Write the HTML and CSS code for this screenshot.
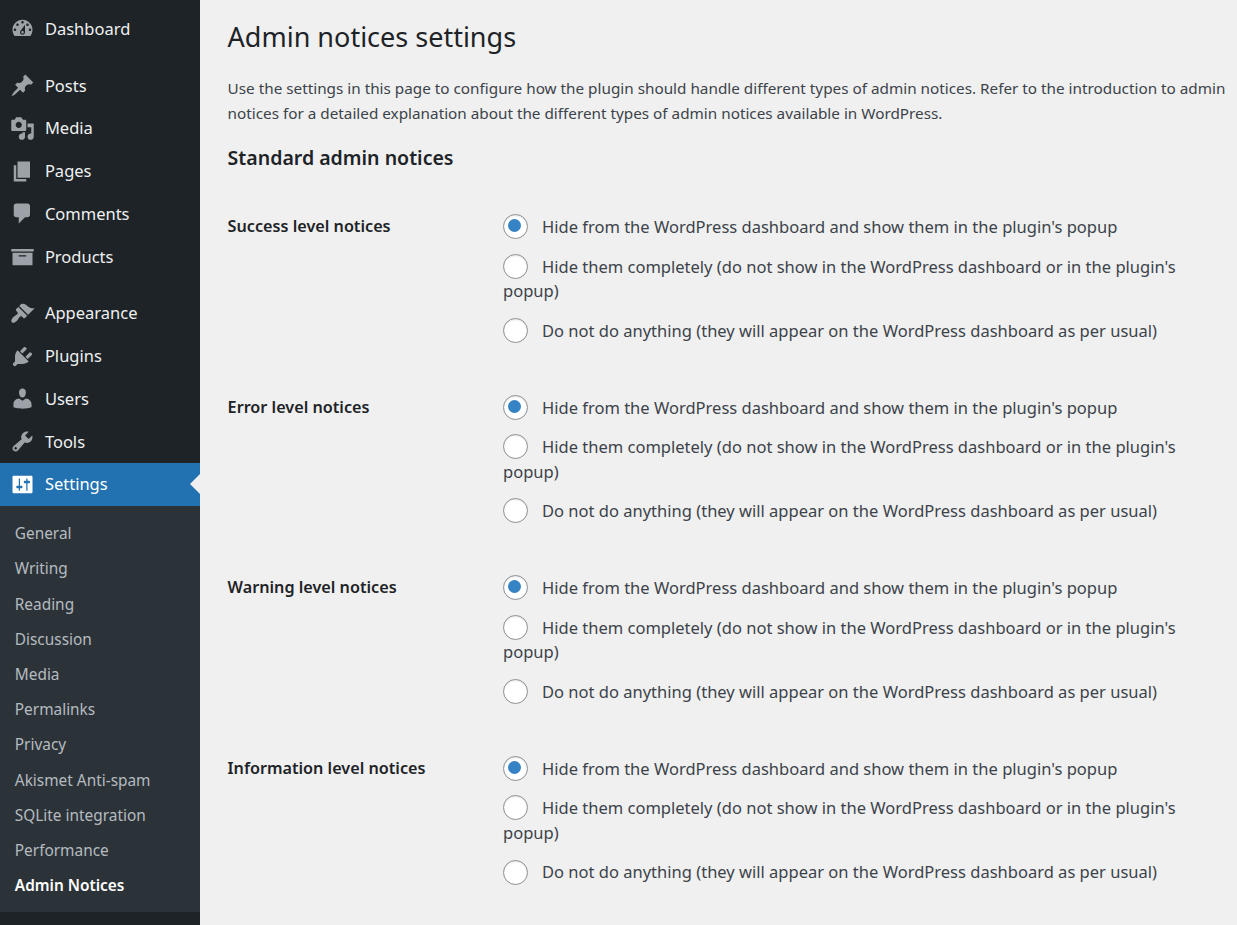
FILE: index.html
```html
<!DOCTYPE html>
<html lang="en">
<head>
<meta charset="utf-8">
<title>Admin notices settings</title>
<link rel="stylesheet" href="styles.css">
</head>
<body>
<div class="admin">
  <aside class="sidebar">
    <ul class="menu">
      <li class="item"><svg class="icon" viewBox="0 0 20 20"><path d="M3.76 16h12.48c1.1-1.37 1.76-3.11 1.76-5 0-4.42-3.58-8-8-8s-8 3.58-8 8c0 1.89.66 3.63 1.76 5zM10 4c.55 0 1 .45 1 1s-.45 1-1 1-1-.45-1-1 .45-1 1-1zM6 6c.55 0 1 .45 1 1s-.45 1-1 1-1-.45-1-1 .45-1 1-1zm8 0c.55 0 1 .45 1 1s-.45 1-1 1-1-.45-1-1 .45-1 1-1zm-5.37 5.55L12 7v6c0 1.1-.9 2-2 2s-2-.9-2-2c0-.57.24-1.08.63-1.45zM4 10c.55 0 1 .45 1 1s-.45 1-1 1-1-.45-1-1 .45-1 1-1zm12 0c.55 0 1 .45 1 1s-.45 1-1 1-1-.45-1-1 .45-1 1-1zm-5 3c0-.55-.45-1-1-1s-1 .45-1 1 .45 1 1 1 1-.45 1-1z"/></svg>Dashboard</li>
      <li class="item item-gap"><svg class="icon" viewBox="0 0 20 20"><path d="M10.44 3.02l1.82-1.82 6.36 6.35-1.83 1.82c-1.05-.68-2.48-.57-3.41.36l-.75.75c-.92.93-1.04 2.35-.35 3.41l-1.83 1.82-2.41-2.41-2.8 2.79c-.42.42-3.38 2.71-3.8 2.29s1.86-3.39 2.28-3.81l2.79-2.79L4.1 9.36l1.83-1.82c1.05.69 2.48.57 3.4-.36l.75-.75c.93-.92 1.05-2.35.36-3.41z"/></svg>Posts</li>
      <li class="item"><svg class="icon" viewBox="0 0 20 20"><path d="M13 11V4c0-.55-.45-1-1-1h-1.67L9 1H5L3.67 3H2c-.55 0-1 .45-1 1v7c0 .55.45 1 1 1h10c.55 0 1-.45 1-1zM7 4.5c1.38 0 2.5 1.12 2.5 2.5S8.38 9.5 7 9.5 4.5 8.38 4.5 7 5.62 4.5 7 4.5zM14 6h5v10.5c0 1.38-1.12 2.5-2.5 2.5S14 17.88 14 16.5s1.12-2.5 2.5-2.5c.17 0 .34.02.5.05V9h-3V6zm-4 8.05V13h2v3.5c0 1.38-1.12 2.5-2.5 2.5S7 17.88 7 16.5 8.12 14 9.5 14c.17 0 .34.02.5.05z"/></svg>Media</li>
      <li class="item"><svg class="icon" viewBox="0 0 20 20"><path d="M6 15V2h10v13H6zm-1 1h8v2H3V5h2v11z"/></svg>Pages</li>
      <li class="item"><svg class="icon" viewBox="0 0 20 20"><path d="M5 2h9c1.1 0 2 .9 2 2v7c0 1.1-.9 2-2 2h-2l-5 5v-5H5c-1.1 0-2-.9-2-2V4c0-1.1.9-2 2-2z"/></svg>Comments</li>
      <li class="item"><svg class="icon" viewBox="0 0 20 20"><path d="M19 4v2H1V4h18zM2 7h16v10H2V7zm11 3V9H7v1h6z"/></svg>Products</li>
      <li class="item item-gap"><svg class="icon" viewBox="0 0 20 20"><path d="M14.48 11.06L7.41 3.99l1.5-1.5c.5-.56 2.3-.47 3.51.32 1.21.8 1.43 1.28 2.91 2.1 1.18.64 2.45 1.26 4.45.85zm-.71.71L6.7 4.7 4.93 6.47c-.39.39-.39 1.02 0 1.41l1.06 1.06c.39.39.39 1.03 0 1.42-.6.6-1.43 1.11-2.21 1.69-.35.26-.7.53-1.01.84C1.43 14.23.4 16.08 1.4 17.07c.99 1 2.84-.03 4.18-1.36.31-.31.58-.66.85-1.02.57-.78 1.08-1.61 1.69-2.21.39-.39 1.02-.39 1.41 0l1.06 1.06c.39.39 1.02.39 1.41 0z"/></svg>Appearance</li>
      <li class="item"><svg class="icon" viewBox="0 0 20 20"><path d="M13.11 4.36L9.87 7.6 8 5.73l3.24-3.24c.35-.34 1.05-.2 1.56.32.52.51.66 1.21.31 1.55zm-8 1.77l.91-1.12 9.01 9.01-1.19.84c-.71.71-2.63 1.16-3.82 1.16H6.14L4.9 17.26c-.59.59-1.54.59-2.12 0-.59-.58-.59-1.53 0-2.12l1.24-1.24v-3.88c0-1.13.4-3.19 1.09-3.89zm7.26 3.97l3.24-3.24c.34-.35 1.04-.21 1.55.31.52.51.66 1.21.31 1.55l-3.24 3.25z"/></svg>Plugins</li>
      <li class="item"><svg class="icon" viewBox="0 0 20 20"><path d="M10 9.25c-2.27 0-2.73-3.44-2.73-3.44C7 4.02 7.82 2 9.97 2c2.16 0 2.98 2.02 2.71 3.81 0 0-.41 3.44-2.68 3.44zm0 2.57L12.72 10c2.39 0 4.52 2.33 4.52 4.53v2.49s-3.65 1.13-7.24 1.13c-3.65 0-7.24-1.13-7.24-1.13v-2.49c0-2.25 1.94-4.48 4.47-4.48z"/></svg>Users</li>
      <li class="item"><svg class="icon" viewBox="0 0 20 20"><path d="M16.68 9.77c-1.34 1.34-3.3 1.67-4.95.99l-5.41 6.52c-.99.99-2.59.99-3.58 0s-.99-2.59 0-3.57l6.52-5.42c-.68-1.65-.35-3.61.99-4.95 1.28-1.28 3.12-1.62 4.72-1.06l-2.89 2.89 2.82 2.82 2.86-2.87c.53 1.58.18 3.39-1.08 4.65zM3.81 16.21c.4.39 1.04.39 1.43 0 .4-.4.4-1.04 0-1.43-.39-.4-1.03-.4-1.43 0-.39.39-.39 1.03 0 1.43z"/></svg>Tools</li>
      <li class="item item-current"><svg class="icon" viewBox="0 0 20 20"><path d="M18 16V4c0-.55-.45-1-1-1H3c-.55 0-1 .45-1 1v12c0 .55.45 1 1 1h14c.55 0 1-.45 1-1zM8 11h1c.55 0 1 .45 1 1s-.45 1-1 1H8v1.5c0 .28-.22.5-.5.5s-.5-.22-.5-.5V13H6c-.55 0-1-.45-1-1s.45-1 1-1h1V5.5c0-.28.22-.5.5-.5s.5.22.5.5V11zm5-2h-1c-.55 0-1-.45-1-1s.45-1 1-1h1V5.5c0-.28.22-.5.5-.5s.5.22.5.5V7h1c.55 0 1 .45 1 1s-.45 1-1 1h-1v5.5c0 .28-.22.5-.5.5s-.5-.22-.5-.5V9z"/></svg>Settings</li>
    </ul>
    <ul class="submenu">
      <li>General</li>
      <li>Writing</li>
      <li>Reading</li>
      <li>Discussion</li>
      <li>Media</li>
      <li>Permalinks</li>
      <li>Privacy</li>
      <li>Akismet Anti-spam</li>
      <li>SQLite integration</li>
      <li>Performance</li>
      <li class="sub-current">Admin Notices</li>
    </ul>
  </aside>
  <main class="content">
    <h1 class="title">Admin notices settings</h1>
    <p class="intro">Use the settings in this page to configure how the plugin should handle different types of admin notices. Refer to the introduction to admin<br>notices for a detailed explanation about the different types of admin notices available in WordPress.</p>
    <h2 class="section">Standard admin notices</h2>
    <div class="row">
      <div class="label">Success level notices</div>
      <div class="options">
        <label><input class="radio" type="radio" name="success" checked>Hide from the WordPress dashboard and show them in the plugin's popup</label>
        <label><input class="radio" type="radio" name="success">Hide them completely (do not show in the WordPress dashboard or in the plugin's popup)</label>
        <label><input class="radio" type="radio" name="success">Do not do anything (they will appear on the WordPress dashboard as per usual)</label>
      </div>
    </div>
    <div class="row">
      <div class="label">Error level notices</div>
      <div class="options">
        <label><input class="radio" type="radio" name="error" checked>Hide from the WordPress dashboard and show them in the plugin's popup</label>
        <label><input class="radio" type="radio" name="error">Hide them completely (do not show in the WordPress dashboard or in the plugin's popup)</label>
        <label><input class="radio" type="radio" name="error">Do not do anything (they will appear on the WordPress dashboard as per usual)</label>
      </div>
    </div>
    <div class="row">
      <div class="label">Warning level notices</div>
      <div class="options">
        <label><input class="radio" type="radio" name="warning" checked>Hide from the WordPress dashboard and show them in the plugin's popup</label>
        <label><input class="radio" type="radio" name="warning">Hide them completely (do not show in the WordPress dashboard or in the plugin's popup)</label>
        <label><input class="radio" type="radio" name="warning">Do not do anything (they will appear on the WordPress dashboard as per usual)</label>
      </div>
    </div>
    <div class="row">
      <div class="label">Information level notices</div>
      <div class="options">
        <label><input class="radio" type="radio" name="info" checked>Hide from the WordPress dashboard and show them in the plugin's popup</label>
        <label><input class="radio" type="radio" name="info">Hide them completely (do not show in the WordPress dashboard or in the plugin's popup)</label>
        <label><input class="radio" type="radio" name="info">Do not do anything (they will appear on the WordPress dashboard as per usual)</label>
      </div>
    </div>
  </main>
</div>
</body>
</html>
```
FILE: styles.css
```css
* { box-sizing: border-box; }
body {
  margin: 0;
  background: #f0f0f0;
  color: #3c434a;
  font-family: "Noto Sans", "Open Sans", sans-serif;
}
.admin {
  display: flex;
  height: 925px;
  overflow: hidden;
}
.sidebar {
  flex: 0 0 200px;
  background: #1d2327;
}
.menu, .submenu {
  margin: 0;
  padding: 0;
  list-style: none;
}
.menu { padding-top: 7.5px; }
.item {
  position: relative;
  display: flex;
  align-items: center;
  gap: 9.5px;
  height: 42.75px;
  padding-left: 10.4px;
  color: #f0f0f1;
  font-size: 16.5px;
  line-height: 24px;
}
.item-gap { margin-top: 14px; }
.icon {
  flex: none;
  width: 25px;
  height: 25px;
  fill: #9ca2a7;
}
.item-current {
  background: #2271b1;
  color: #fff;
}
.item-current .icon { fill: #fff; }
.item-current::after {
  content: "";
  position: absolute;
  top: 11px;
  right: 0;
  border: 10px solid transparent;
  border-left-width: 0;
  border-right-color: #f0f0f0;
}
.submenu {
  padding: 10.5px 0 8.5px 14.8px;
  background: #2c3338;
  color: #b5bbc0;
  font-size: 15.4px;
}
.submenu li {
  height: 35.2px;
  line-height: 35.2px;
}
.submenu .sub-current {
  color: #fff;
  font-weight: 600;
}
.content {
  flex: 1;
  padding: 17px 0 0 27.6px;
}
.title {
  margin: 0;
  color: #1d2327;
  font-size: 27px;
  font-weight: 400;
  line-height: 40px;
}
.intro {
  margin: 19px 0 0;
  font-size: 15.29px;
  line-height: 25px;
  white-space: nowrap;
}
.section {
  margin: 19px 0 0;
  color: #1d2327;
  font-size: 19.55px;
  font-weight: 600;
  line-height: 25px;
}
.row {
  display: grid;
  grid-template-columns: 275.4px 690px;
  height: 180.6px;
  padding-top: 27px;
}
.section + .row { margin-top: 18px; }
.label {
  color: #1d2327;
  font-size: 16.2px;
  font-weight: 600;
  line-height: 23px;
}
.options {
  display: flex;
  flex-direction: column;
  gap: 15.1px;
  font-size: 16.53px;
  line-height: 24.5px;
}
.radio {
  appearance: none;
  width: 25px;
  height: 25px;
  margin: -6px 14px -2px 0;
  padding: 4px;
  border: 1px solid #8c8f94;
  border-radius: 50%;
  background: #fff;
  box-shadow: inset 0 1px 2px rgba(0, 0, 0, 0.1);
  vertical-align: middle;
}
.radio:checked::before {
  content: "";
  display: block;
  width: 13px;
  height: 13px;
  border-radius: 50%;
  background: #3582c4;
}
```
